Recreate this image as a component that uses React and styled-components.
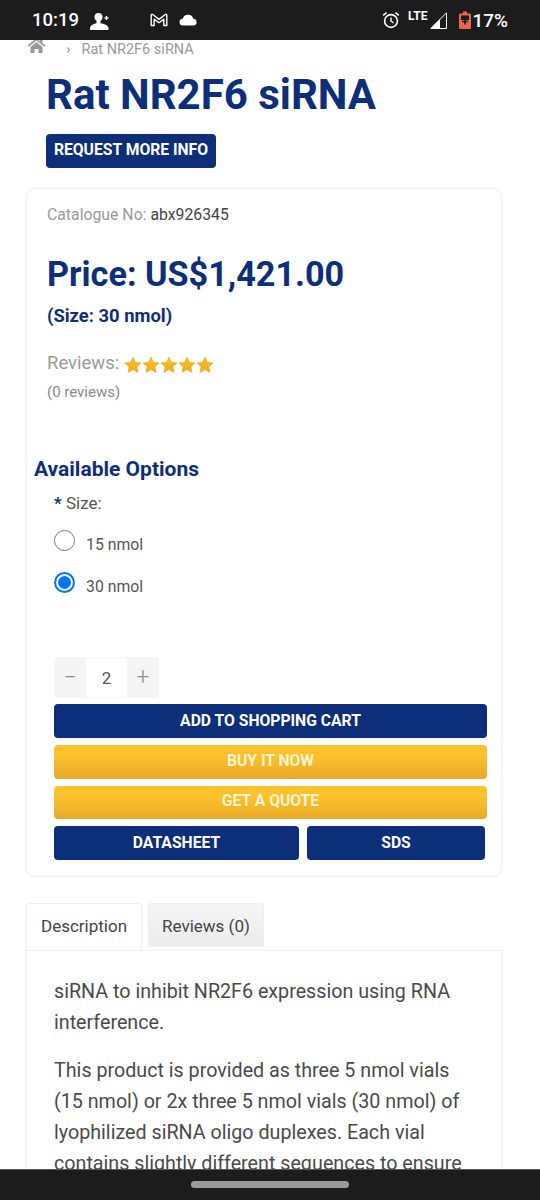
import styled, { createGlobalStyle } from "styled-components";

const NAVY = "#0d2e78";

const GlobalStyle = createGlobalStyle`
  * { box-sizing: border-box; }
  html, body { margin: 0; padding: 0; background: #fff; }
  body { font-family: Roboto, "Noto Sans", sans-serif; }
`;

const Star = () => (
  <svg width="18" height="18" viewBox="0 0 24 24">
    <defs>
      <linearGradient id="starFill" x1="0" y1="0" x2="0" y2="1">
        <stop offset="0" stopColor="#fcc52c" />
        <stop offset="1" stopColor="#eda91c" />
      </linearGradient>
    </defs>
    <path
      d="M12 1.5l3.2 7 7.6.8-5.7 5.1 1.6 7.5L12 18l-6.7 3.9 1.6-7.5L1.2 9.3l7.6-.8z"
      fill="url(#starFill)"
      stroke="#eda91c"
      strokeWidth="1"
      strokeLinejoin="round"
    />
  </svg>
);

export default function App() {
  return (
    <Screen>
      <GlobalStyle />
      <StatusBar>
        <Time>10:19</Time>
        <svg width="20" height="20" viewBox="0 0 20 20" style={{ marginLeft: 11, marginTop: 3 }}>
          <circle cx="8.5" cy="5" r="4" fill="#fff" />
          <path d="M6.500 8h4v3.200c3.500.6 7.500 1.800 8 4.800v2H0v-2c.5-3 4-4.200 6.500-4.800z" fill="#fff" />
          <path d="M14.500 6h4M16.500 4v4" stroke="#fff" strokeWidth="1.400" />
        </svg>
        <svg width="18" height="14" viewBox="0 0 18 14" fill="none" style={{ marginLeft: 40 }}>
          <path
            d="M1.200 12.500V2.200c0-.8.9-1.200 1.500-.7L9 6.400l6.300-4.900c.6-.5 1.500-.1 1.500.7v10.300h-3V6.200L9 9.800 4.200 6.200v6.300z"
            stroke="#fff"
            strokeWidth="1.400"
            strokeLinejoin="round"
          />
        </svg>
        <svg width="18" height="12" viewBox="0 0 18 12" style={{ marginLeft: 11 }}>
          <path
            d="M4.200 11.500a3.400 3.400 0 0 1-.5-6.800A5.600 5.600 0 0 1 9.300.8a5.300 5.300 0 0 1 5 3.900 3.400 3.400 0 0 1-.3 6.800z"
            fill="#fff"
          />
        </svg>
        <StatusRight>
          <svg width="18" height="18" viewBox="0 0 18 18" fill="none" stroke="#fff">
            <circle cx="9" cy="10" r="6.400" strokeWidth="1.600" />
            <path d="M9 6.500V10l2.600 2" strokeWidth="1.400" />
            <path d="M1.200 4.400L4.600 1.600M16.800 4.400l-3.400-2.800" strokeWidth="1.700" />
          </svg>
          <Lte>LTE</Lte>
          <svg width="17" height="17" viewBox="0 0 17 17" style={{ marginLeft: 3 }}>
            <path d="M16.500 .8V16.500H.8z" fill="none" stroke="#fff" strokeWidth="1" />
            <path d="M10 7.300V16.500H.8z" fill="#fff" />
          </svg>
          <svg width="12" height="18" viewBox="0 0 12 18" style={{ marginLeft: 12 }}>
            <path d="M4 .5h4v2h3a1 1 0 0 1 1 1V17a1 1 0 0 1-1 1H1a1 1 0 0 1-1-1V3.500a1 1 0 0 1 1-1h3z" fill="#e8674a" />
            <path d="M2 4.500h8V9H2z" fill="#1c1c1c" />
            <path d="M6 7.500v6M3.200 10.500h5.600" stroke="#1c1c1c" strokeWidth="1.600" />
          </svg>
          <Battery>17%</Battery>
        </StatusRight>
      </StatusBar>

      <Page>
        <Breadcrumb>
          <svg width="19" height="16" viewBox="0 0 19 16">
            <path d="M9.500 1L.5 8.500l1.300 1.300L9.500 3.500l7.700 6.300 1.300-1.300-3-2.500V1.500h-2.500v2.700z" fill="#999" />
            <path d="M3.500 10l6-5 6 5v6h-4v-4h-4v4h-4z" fill="#999" />
          </svg>
          <Chevron>›</Chevron>
          <span>Rat NR2F6 siRNA</span>
        </Breadcrumb>

        <Title>Rat NR2F6 siRNA</Title>
        <InfoButton>REQUEST MORE INFO</InfoButton>

        <Card>
          <Catalogue>
            Catalogue No: <strong>abx926345</strong>
          </Catalogue>
          <Price>Price: US$1,421.00</Price>
          <SizeNote>(Size: 30 nmol)</SizeNote>
          <ReviewLine>
            Reviews:
            <Stars>
              <Star />
              <Star />
              <Star />
              <Star />
              <Star />
            </Stars>
          </ReviewLine>
          <ReviewCount>(0 reviews)</ReviewCount>

          <OptionsTitle>Available Options</OptionsTitle>
          <Options>
            <SizeLabel>
              <b>*</b> Size:
            </SizeLabel>
            <Option>
              <Radio />
              <OptionText>15 nmol</OptionText>
            </Option>
            <Option>
              <Radio $checked />
              <OptionText>30 nmol</OptionText>
            </Option>

            <Quantity>
              <QtyButton>−</QtyButton>
              <QtyValue>2</QtyValue>
              <QtyButton>+</QtyButton>
            </Quantity>

            <Actions>
              <Action>ADD TO SHOPPING CART</Action>
              <Action $yellow>BUY IT NOW</Action>
              <Action $yellow>GET A QUOTE</Action>
              <ActionRow>
                <Action>DATASHEET</Action>
                <Action>SDS</Action>
              </ActionRow>
            </Actions>
          </Options>
        </Card>

        <Tabs>
          <Tab $active>Description</Tab>
          <Tab>Reviews (0)</Tab>
        </Tabs>
        <Panel>
          <p>siRNA to inhibit NR2F6 expression using RNA interference.</p>
          <p>
            This product is provided as three 5 nmol vials (15 nmol) or 2x three 5 nmol vials (30 nmol) of
            lyophilized siRNA oligo duplexes. Each vial contains slightly different sequences to ensure
          </p>
        </Panel>
      </Page>

      <NavBar>
        <Handle />
      </NavBar>
    </Screen>
  );
}

const Screen = styled.div`
  width: 540px;
  height: 1200px;
  display: flex;
  flex-direction: column;
  overflow: hidden;
  background: #fff;
`;

const StatusBar = styled.div`
  flex: 0 0 40px;
  display: flex;
  align-items: center;
  padding: 0 32px;
  background: #1c1c1c;
  color: #fff;
`;

const Time = styled.span`
  font-size: 18.500px;
  font-weight: 500;
`;

const StatusRight = styled.div`
  margin-left: auto;
  display: flex;
  align-items: center;
`;

const Lte = styled.span`
  margin: -8px 0 0 8px;
  font-size: 12px;
  font-weight: 700;
`;

const Battery = styled.span`
  margin-left: 1px;
  font-size: 19px;
  font-weight: 500;
`;

const Page = styled.div`
  flex: 1;
  min-height: 0;
  overflow: hidden;
  padding: 0 38px 0 26px;
`;

const Breadcrumb = styled.div`
  height: 18px;
  margin-top: -1px;
  display: flex;
  align-items: center;
  color: #9a9a9a;
  font-size: 14.500px;

  span:last-child {
    margin-top: 2px;
  }

  svg {
    margin-left: 1px;
    margin-top: -7px;
  }
`;

const Chevron = styled.span`
  margin: 2px 11px 0 20px;
  font-size: 15px;
`;

const Title = styled.h1`
  margin: 14px 0 0 20px;
  color: ${NAVY};
  font-size: 42px;
  line-height: 48px;
  font-weight: 700;
`;

const InfoButton = styled.button`
  display: block;
  width: 170px;
  height: 34px;
  margin: 15px 0 0 20px;
  padding: 0 0 3px;
  border: 0;
  border-radius: 4px;
  background: ${NAVY};
  color: #fff;
  font-family: inherit;
  font-size: 15.700px;
  font-weight: 700;
`;

const Card = styled.div`
  height: 689px;
  margin-top: 20px;
  padding: 16px 14px 0 20px;
  border: 1px solid #eeeeee;
  border-radius: 8px;
`;

const Catalogue = styled.div`
  color: #9a9a9a;
  font-size: 15.800px;
  line-height: 20px;

  strong {
    color: #444;
    font-weight: 400;
  }
`;

const Price = styled.div`
  margin-top: 29px;
  color: ${NAVY};
  font-size: 34.200px;
  line-height: 40px;
  font-weight: 700;
`;

const SizeNote = styled.div`
  margin-top: 11px;
  color: ${NAVY};
  font-size: 18.400px;
  line-height: 22px;
  font-weight: 700;
`;

const ReviewLine = styled.div`
  margin-top: 24px;
  display: flex;
  align-items: center;
  gap: 5px;
  height: 24px;
  color: #9a9a9a;
  font-size: 18.500px;
`;

const Stars = styled.span`
  display: flex;
  margin-top: 3px;
`;

const ReviewCount = styled.div`
  margin-top: 7px;
  color: #8a8a8a;
  font-size: 15px;
  line-height: 20px;
`;

const OptionsTitle = styled.h2`
  margin: 54px 0 0 -13px;
  color: ${NAVY};
  font-size: 21px;
  line-height: 26px;
  font-weight: 700;
`;

const Options = styled.div`
  margin-left: 7px;
`;

const SizeLabel = styled.div`
  margin-top: 11px;
  color: #555;
  font-size: 17px;
  line-height: 20px;

  b {
    color: ${NAVY};
  }
`;

const Option = styled.label`
  height: 42px;
  display: flex;
  align-items: center;
  gap: 11px;
  color: #555;
  font-size: 15.800px;

  &:first-of-type {
    margin-top: 6px;
  }
`;

const OptionText = styled.span`
  margin-top: 8px;
`;

const Radio = styled.span`
  width: 21px;
  height: 21px;
  flex: none;
  border-radius: 50%;
  border: ${(p) => (p.$checked ? "2px solid #0a75fb" : "1.500px solid #777")};
  box-shadow: ${(p) => (p.$checked ? "inset 0 0 0 2px #fff, inset 0 0 0 10px #0a75fb" : "none")};
  background: #fff;
`;

const Quantity = styled.div`
  width: 105px;
  height: 41px;
  margin-top: 54px;
  display: flex;
  align-items: stretch;
  padding: 1px 0;
  border-radius: 3px;
  background: #f5f5f5;
`;

const QtyButton = styled.span`
  flex: 1;
  display: flex;
  align-items: center;
  justify-content: center;
  color: #8f8f8f;
  font-size: 23px;
  font-weight: 300;
`;

const QtyValue = styled.span`
  flex: 0 0 41px;
  display: flex;
  align-items: center;
  justify-content: center;
  background: #fff;
  color: #555;
  font-size: 17px;
`;

const Actions = styled.div`
  width: 433px;
  margin-top: 6px;
  display: flex;
  flex-direction: column;
  gap: 7px;
`;

const ActionRow = styled.div`
  display: grid;
  grid-template-columns: 245px 178px;
  gap: 8px;
`;

const Action = styled.button`
  height: ${(p) => (p.$yellow ? "33.500px" : "34px")};
  padding: 0 0 ${(p) => (p.$yellow ? "3px" : "1px")};
  border: 0;
  border-radius: 4px;
  background: ${(p) => (p.$yellow ? "linear-gradient(#fcc22c 30%, #e8a928)" : NAVY)};
  color: ${(p) => (p.$yellow ? "#fdf3d0" : "#fff")};
  font-family: inherit;
  font-size: 15.700px;
  font-weight: 700;
`;

const Tabs = styled.div`
  margin-top: 26px;
  display: flex;
  align-items: flex-start;
  gap: 6px;
`;

const Tab = styled.div`
  width: 116px;
  height: ${(p) => (p.$active ? "47px" : "44px")};
  display: flex;
  align-items: center;
  justify-content: center;
  padding-bottom: ${(p) => (p.$active ? "2px" : "0")};
  border: 1px solid #eeeeee;
  border-bottom: 0;
  border-radius: 3px 3px 0 0;
  background: ${(p) => (p.$active ? "#fff" : "linear-gradient(#f5f5f5, #ececec)")};
  color: #444;
  font-size: 17px;
`;

const Panel = styled.div`
  padding: 25px 26px 0 27px;
  border: 1px solid #eeeeee;
  border-bottom: 0;
  color: #4a4a4a;
  font-size: 19.700px;
  line-height: 31px;

  p {
    margin: 0 0 17px;
  }
`;

const NavBar = styled.div`
  flex: 0 0 31px;
  display: flex;
  justify-content: center;
  padding-top: 11px;
  border-top: 1px solid #555;
  background: #1c1c1c;
`;

const Handle = styled.div`
  width: 158px;
  height: 7px;
  border-radius: 4px;
  background: #9b9b9b;
`;
